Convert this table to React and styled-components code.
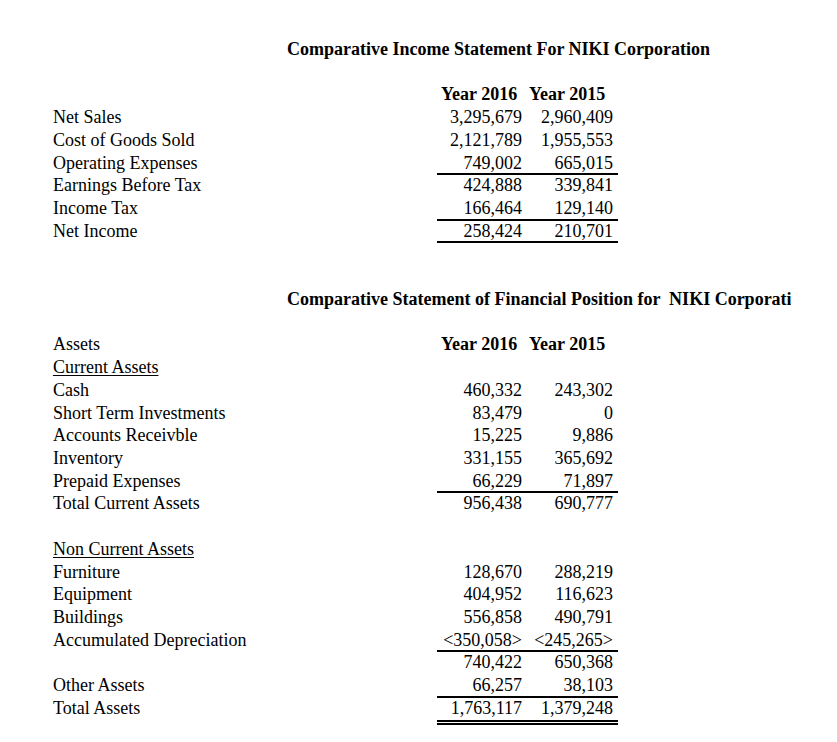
import React from "react";
import styled, { createGlobalStyle, css } from "styled-components";

const Global = createGlobalStyle`
  html, body { margin: 0; padding: 0; background: #fff; }
  body { font-family: "Liberation Serif", "Times New Roman", serif; color: #000; }
`;

const ROW = 22.73;

const Sheet = styled.div`
  padding: 38px 0 24px 53px;
  width: 784px;
`;

const TitleRow = styled.div`
  height: ${ROW}px;
  line-height: ${ROW}px;
  padding-left: 234px;
  width: 504px;
  overflow: hidden;
  white-space: pre;
  font-size: 18px;
  font-weight: bold;
`;

const Row = styled.div`
  display: grid;
  grid-template-columns: 384px 89px 92px;
  height: ${ROW}px;
  line-height: ${ROW}px;
  font-size: 18px;
  white-space: nowrap;
`;

const Label = styled.div`
  text-decoration: ${(p) => (p.$underline ? "underline" : "none")};
  text-underline-offset: 2px;
  text-decoration-thickness: 1px;
`;

const ruleStyles = {
  single: css`
    box-shadow: inset 0 -1px 0 #000, 0 1px 0 #000;
  `,
  double: css`
    border-bottom: 5px double #000;
  `,
};

const Num = styled.div`
  box-sizing: content-box;
  height: ${ROW}px;
  text-align: right;
  padding-right: ${(p) => (p.$last ? 5 : 4)}px;
  ${(p) => (p.$rule ? ruleStyles[p.$rule] : "")}
`;

const Head = styled.div`
  font-weight: bold;
  padding-left: ${(p) => (p.$last ? 3 : 4)}px;
`;

const Blank = styled.div`
  height: ${ROW}px;
`;

const rows = [
  { t: "title", text: "Comparative Income Statement For NIKI Corporation" },
  { t: "blank" },
  { t: "head", label: "" },
  { label: "Net Sales", a: "3,295,679", b: "2,960,409" },
  { label: "Cost of Goods Sold", a: "2,121,789", b: "1,955,553" },
  { label: "Operating Expenses", a: "749,002", b: "665,015", rule: "single" },
  { label: "Earnings Before Tax", a: "424,888", b: "339,841" },
  { label: "Income Tax", a: "166,464", b: "129,140", rule: "single" },
  { label: "Net Income", a: "258,424", b: "210,701", rule: "single" },
  { t: "blank" },
  { t: "blank" },
  { t: "title", text: "Comparative Statement of Financial Position for  NIKI Corporation" },
  { t: "blank" },
  { t: "head", label: "Assets" },
  { label: "Current Assets", underline: true },
  { label: "Cash", a: "460,332", b: "243,302" },
  { label: "Short Term Investments", a: "83,479", b: "0" },
  { label: "Accounts Receivble", a: "15,225", b: "9,886" },
  { label: "Inventory", a: "331,155", b: "365,692" },
  { label: "Prepaid Expenses", a: "66,229", b: "71,897", rule: "single" },
  { label: "Total Current Assets", a: "956,438", b: "690,777" },
  { t: "blank" },
  { label: "Non Current Assets", underline: true },
  { label: "Furniture", a: "128,670", b: "288,219" },
  { label: "Equipment", a: "404,952", b: "116,623" },
  { label: "Buildings", a: "556,858", b: "490,791" },
  { label: "Accumulated Depreciation", a: "<350,058>", b: "<245,265>", rule: "single" },
  { label: "", a: "740,422", b: "650,368" },
  { label: "Other Assets", a: "66,257", b: "38,103", rule: "single" },
  { label: "Total Assets", a: "1,763,117", b: "1,379,248", rule: "double" },
];

export default function App() {
  return (
    <>
      <Global />
      <Sheet>
        {rows.map((r, i) => {
          if (r.t === "title") return <TitleRow key={i}>{r.text}</TitleRow>;
          if (r.t === "blank") return <Blank key={i} />;
          if (r.t === "head")
            return (
              <Row key={i}>
                <Label>{r.label}</Label>
                <Head>Year 2016</Head>
                <Head $last>Year 2015</Head>
              </Row>
            );
          return (
            <Row key={i}>
              <Label $underline={r.underline}>{r.label}</Label>
              <Num $rule={r.rule}>{r.a}</Num>
              <Num $rule={r.rule} $last>{r.b}</Num>
            </Row>
          );
        })}
      </Sheet>
    </>
  );
}
